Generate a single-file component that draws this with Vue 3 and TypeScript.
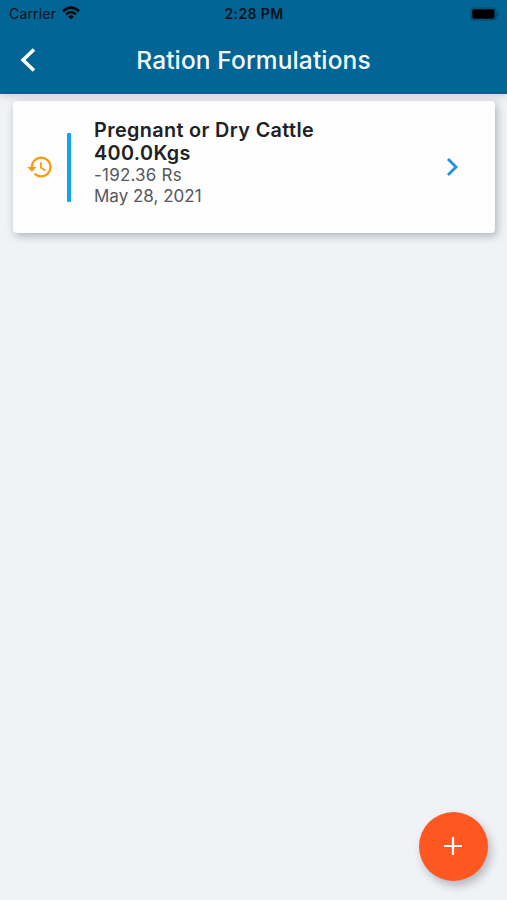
<script setup lang="ts">
interface Formulation {
  title: string
  weight: string
  cost: string
  date: string
}

const formulations: Formulation[] = [
  { title: 'Pregnant or Dry Cattle', weight: '400.0Kgs', cost: '-192.36 Rs', date: 'May 28, 2021' },
]
</script>

<template>
  <div class="screen">
    <header class="header">
      <div class="status">
        <div class="carrier">
          <span>Carrier</span>
          <svg class="wifi" viewBox="0 0 18 14" fill="none" stroke="#02080c" stroke-width="2.5">
            <path d="M1 5.2Q9-2 17 5.2" />
            <path d="M4 8.3Q9 3.9 14 8.3" />
            <path d="M6.2 10.5Q9 8 11.8 10.5L9 13.4Z" fill="#02080c" stroke="none" />
          </svg>
        </div>
        <span class="time">2:28 PM</span>
        <svg class="battery" viewBox="0 0 30 14">
          <rect x="1" y="1" width="25" height="12" rx="3.2" fill="none" stroke="#064566" stroke-width="1.2" />
          <rect x="2.2" y="2.3" width="22.3" height="9.5" rx="1.8" fill="#000" />
          <path d="M27.4 5v4.2q1.5-.7 1.5-2.1t-1.5-2.1z" fill="#064566" />
        </svg>
      </div>
      <div class="nav">
        <button class="back" aria-label="Back">
          <svg viewBox="0 0 16 26" fill="none" stroke="#fff" stroke-width="3.5">
            <path d="M14 2.4L3 13L14 23.6" />
          </svg>
        </button>
        <h1 class="heading">Ration Formulations</h1>
      </div>
    </header>

    <main class="list">
      <article v-for="item in formulations" :key="item.title" class="card">
        <svg class="history" viewBox="0 0 24 24" fill="#fb9a0e">
          <path d="M13 3a9 9 0 0 0-9 9H1l3.89 3.89.07.14L9 12H6c0-3.87 3.13-7 7-7s7 3.13 7 7-3.13 7-7 7c-1.93 0-3.68-.79-4.94-2.06l-1.42 1.42A8.954 8.954 0 0 0 13 21a9 9 0 0 0 0-18zm-1 5v5l4.28 2.54.72-1.21-3.5-2.08V8H12z" />
        </svg>
        <div class="bar"></div>
        <div class="details">
          <div class="title">{{ item.title }}</div>
          <div class="title weight">{{ item.weight }}</div>
          <div class="meta cost">{{ item.cost }}</div>
          <div class="meta">{{ item.date }}</div>
        </div>
        <svg class="chevron" viewBox="0 0 12 20" fill="none" stroke="#2490e2" stroke-width="2.9">
          <path d="M2 2L10 10L2 18" />
        </svg>
      </article>
    </main>

    <button class="fab" aria-label="Add">
      <svg viewBox="0 0 18 18" stroke="#fff" stroke-width="2.2">
        <path d="M9 0V18M0 9H18" />
      </svg>
    </button>
  </div>
</template>

<style>
body {
  margin: 0;
}
</style>

<style scoped>
.screen {
  position: relative;
  box-sizing: border-box;
  height: 900px;
  overflow: hidden;
  background: #f0f2f6;
  font-family: Inter, "Liberation Sans", sans-serif;
}
button {
  border: 0;
  padding: 0;
  background: none;
}
svg {
  display: block;
}
.header {
  height: 93.5px;
  background: #026595;
  box-shadow: 0 2px 8px rgba(0, 0, 0, 0.15);
}
.status {
  display: grid;
  grid-template-columns: 1fr auto 1fr;
  align-items: center;
  height: 27px;
  padding: 0 7px 0 9px;
  color: #02121b;
  font-size: 14px;
}
.carrier {
  display: flex;
  align-items: center;
  gap: 6px;
  letter-spacing: 0.17px;
}
.wifi {
  width: 18px;
  height: 14px;
  margin-top: -2px;
}
.time {
  margin-left: -1px;
  font-size: 14px;
  font-weight: 600;
  letter-spacing: 0.4px;
}
.battery {
  width: 30px;
  height: 14px;
  justify-self: end;
}
.nav {
  display: grid;
  grid-template-columns: 60px 1fr 60px;
  align-items: center;
  height: 65px;
}
.back {
  margin-left: 19.5px;
  width: 16px;
}
.back svg {
  width: 16px;
  height: 26px;
}
.heading {
  margin: 0;
  color: #f4fbff;
  font-size: 24.5px;
  font-weight: 500;
  line-height: 30px;
  letter-spacing: 0.12px;
  text-align: center;
  white-space: nowrap;
}
.list {
  padding: 7.5px 12px 0 13px;
}
.card {
  display: flex;
  align-items: center;
  box-sizing: border-box;
  height: 132px;
  padding: 0 37px 0 13px;
  border-radius: 4px;
  background: #fefefe;
  box-shadow: 2px 3px 8px rgba(40, 45, 55, 0.32);
}
.history {
  width: 28px;
  height: 28px;
}
.bar {
  width: 4px;
  height: 69px;
  margin-left: 13px;
  border-radius: 1px;
  background: #13a5ec;
}
.details {
  flex: 1;
  margin: -9px 0 0 23px;
  white-space: nowrap;
}
.title {
  color: #202124;
  font-size: 19.8px;
  font-weight: 600;
  line-height: 23px;
  letter-spacing: 0.37px;
}
.meta {
  color: #55585c;
  font-size: 17px;
  line-height: 21px;
}
.cost {
  letter-spacing: 0.2px;
}
.chevron {
  width: 12px;
  height: 20px;
}
.fab {
  position: absolute;
  right: 19px;
  bottom: 19px;
  display: grid;
  place-items: center;
  width: 69px;
  height: 69px;
  border-radius: 50%;
  background: #fe5722;
  box-shadow: 3px 5px 9px rgba(30, 35, 45, 0.28);
}
.fab svg {
  width: 18px;
  height: 18px;
  margin: 0 1px 1px 0;
}
</style>
